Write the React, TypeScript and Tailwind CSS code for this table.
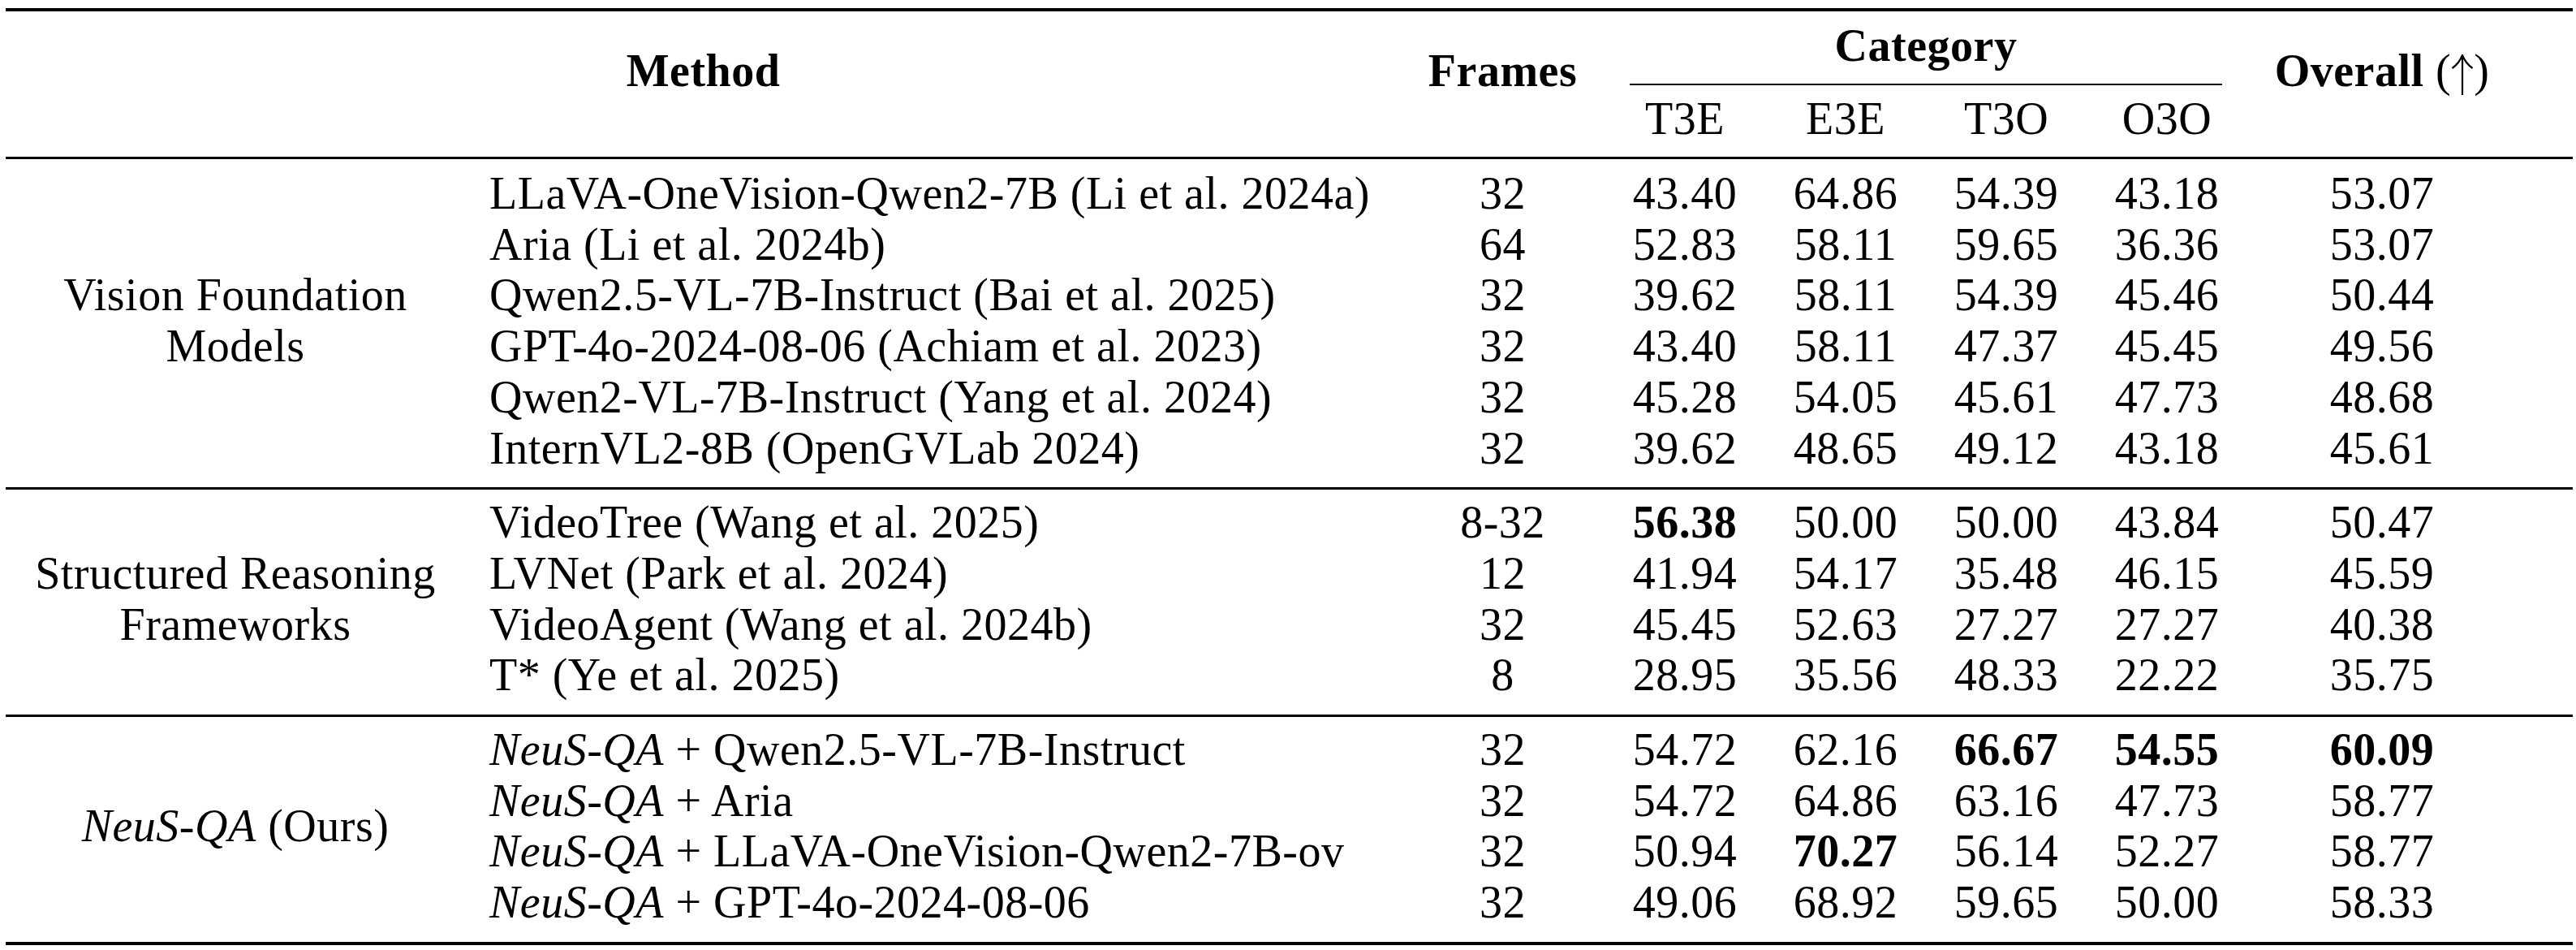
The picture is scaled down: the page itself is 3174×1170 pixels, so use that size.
import React from "react";

type Cell = { v: string; b?: boolean };
type Row = { method: React.ReactNode; frames: string; cells: Cell[]; overall: Cell };
type Section = { label: React.ReactNode; rows: Row[]; pt: string; pb: string };

const n = (v: string, b = false): Cell => ({ v, b });

const Neus = () => <i>NeuS-QA</i>;

const sections: Section[] = [
  {
    label: (
      <>
        Vision Foundation
        <br />
        Models
      </>
    ),
    pt: "pt-[11px]",
    pb: "pb-[17px]",
    rows: [
      { method: "LLaVA-OneVision-Qwen2-7B (Li et al. 2024a)", frames: "32", cells: [n("43.40"), n("64.86"), n("54.39"), n("43.18")], overall: n("53.07") },
      { method: "Aria (Li et al. 2024b)", frames: "64", cells: [n("52.83"), n("58.11"), n("59.65"), n("36.36")], overall: n("53.07") },
      { method: "Qwen2.5-VL-7B-Instruct (Bai et al. 2025)", frames: "32", cells: [n("39.62"), n("58.11"), n("54.39"), n("45.46")], overall: n("50.44") },
      { method: "GPT-4o-2024-08-06 (Achiam et al. 2023)", frames: "32", cells: [n("43.40"), n("58.11"), n("47.37"), n("45.45")], overall: n("49.56") },
      { method: "Qwen2-VL-7B-Instruct (Yang et al. 2024)", frames: "32", cells: [n("45.28"), n("54.05"), n("45.61"), n("47.73")], overall: n("48.68") },
      { method: "InternVL2-8B (OpenGVLab 2024)", frames: "32", cells: [n("39.62"), n("48.65"), n("49.12"), n("43.18")], overall: n("45.61") },
    ],
  },
  {
    label: (
      <>
        Structured Reasoning
        <br />
        Frameworks
      </>
    ),
    pt: "pt-[9px]",
    pb: "pb-[17px]",
    rows: [
      { method: "VideoTree (Wang et al. 2025)", frames: "8-32", cells: [n("56.38", true), n("50.00"), n("50.00"), n("43.84")], overall: n("50.47") },
      { method: "LVNet (Park et al. 2024)", frames: "12", cells: [n("41.94"), n("54.17"), n("35.48"), n("46.15")], overall: n("45.59") },
      { method: "VideoAgent (Wang et al. 2024b)", frames: "32", cells: [n("45.45"), n("52.63"), n("27.27"), n("27.27")], overall: n("40.38") },
      { method: "T* (Ye et al. 2025)", frames: "8", cells: [n("28.95"), n("35.56"), n("48.33"), n("22.22")], overall: n("35.75") },
    ],
  },
  {
    label: (
      <>
        <Neus /> (Ours)
      </>
    ),
    pt: "pt-[9px]",
    pb: "pb-[17px]",
    rows: [
      { method: <><Neus /> + Qwen2.5-VL-7B-Instruct</>, frames: "32", cells: [n("54.72"), n("62.16"), n("66.67", true), n("54.55", true)], overall: n("60.09", true) },
      { method: <><Neus /> + Aria</>, frames: "32", cells: [n("54.72"), n("64.86"), n("63.16"), n("47.73")], overall: n("58.77") },
      { method: <><Neus /> + LLaVA-OneVision-Qwen2-7B-ov</>, frames: "32", cells: [n("50.94"), n("70.27", true), n("56.14"), n("52.27")], overall: n("58.77") },
      { method: <><Neus /> + GPT-4o-2024-08-06</>, frames: "32", cells: [n("49.06"), n("68.92"), n("59.65"), n("50.00")], overall: n("58.33") },
    ],
  },
];

const Num = ({ c }: { c: Cell }) => (
  <div className={"text-center " + (c.b ? "font-bold" : "")}>{c.v}</div>
);

// thin math-style up arrow, as in $\uparrow$
const UpArrow = () => (
  <svg width="28" height="50" viewBox="0 0 28 50" className="inline-block align-[-11px]" fill="none" stroke="black" strokeWidth="2.2">
    <path d="M14 2 V50" />
    <path d="M1.5 17 Q10 11 14 1 Q18 11 26.5 17" />
  </svg>
);

const Header = () => (
  <div className="grid grid-cols-[1719px_251px_792px_332px] h-[179px]">
    <div className="pt-[42px] text-center font-bold">Method</div>
    <div className="pt-[42px] text-center font-bold">Frames</div>
    <div className="flex flex-col pt-[11px]">
      <div className="text-center font-bold">Category</div>
      <div className="mx-[31px] mt-[15px] h-[2px] bg-black" />
      <div className="grid grid-cols-4 pt-[10px]">
        <div className="text-center">T3E</div>
        <div className="text-center">E3E</div>
        <div className="text-center">T3O</div>
        <div className="text-center">O3O</div>
      </div>
    </div>
    <div className="pt-[42px] text-center whitespace-nowrap">
      <span className="font-bold">Overall</span> (<UpArrow />)
    </div>
  </div>
);

const Body = ({ s }: { s: Section }) => (
  <div className={"flex " + s.pt + " " + s.pb}>
    <div className="w-[566px] flex items-center justify-center text-center">
      <div>{s.label}</div>
    </div>
    <div className="flex flex-col">
      {s.rows.map((r, i) => (
        <div key={i} className="grid grid-cols-[1153px_251px_198px_198px_198px_198px_332px]">
          <div className="pl-[30px] whitespace-nowrap">{r.method}</div>
          <div className="text-center">{r.frames}</div>
          {r.cells.map((c, j) => (
            <Num key={j} c={c} />
          ))}
          <Num c={r.overall} />
        </div>
      ))}
    </div>
  </div>
);

export default function App() {
  return (
    <div className="w-[3174px] h-[1170px] bg-white text-black font-['Liberation_Serif','Times_New_Roman',serif] text-[56px] leading-[62.7px] tracking-[0.5px] overflow-hidden">
      <div className="ml-[7px] mt-[10px] w-[3163px]">
        <div className="h-[4px] bg-black" />
        <Header />
        <div className="h-[3px] bg-black" />
        <Body s={sections[0]} />
        <div className="h-[3px] bg-black" />
        <Body s={sections[1]} />
        <div className="h-[3px] bg-black" />
        <Body s={sections[2]} />
        <div className="h-[4px] bg-black" />
      </div>
    </div>
  );
}
